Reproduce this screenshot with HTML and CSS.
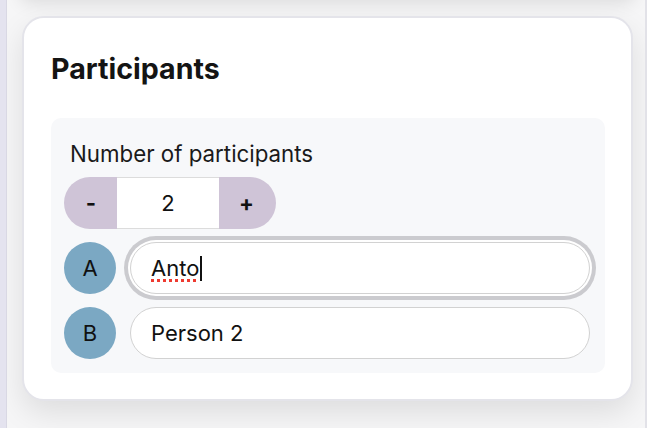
FILE: index.html
```html
<!DOCTYPE html>
<html lang="en">
<head>
<meta charset="utf-8">
<title>Participants</title>
<link rel="stylesheet" href="styles.css">
</head>
<body>
<div class="shell">
  <div class="sidebar"></div>
  <main class="column">
    <div class="prev-card"></div>
    <section class="card">
      <h2 class="title">Participants</h2>
      <div class="panel">
        <div class="label">Number of participants</div>
        <div class="stepper">
          <button class="step-btn minus">-</button>
          <div class="step-value">2</div>
          <button class="step-btn plus">+</button>
        </div>
        <div class="row">
          <div class="avatar">A</div>
          <div class="name-input focused"><span class="misspelled">Anto</span><span class="caret"></span></div>
        </div>
        <div class="row">
          <div class="avatar">B</div>
          <div class="name-input">Person 2</div>
        </div>
      </div>
    </section>
  </main>
</div>
</body>
</html>
```

FILE: styles.css
```css
* { box-sizing: border-box; }
html, body { margin: 0; padding: 0; }
body {
  width: 650px;
  height: 428px;
  overflow: hidden;
  background: #ffffff;
  font-family: Inter, "Noto Sans", sans-serif;
  color: #111;
}
.shell {
  display: flex;
  height: 428px;
}
.sidebar {
  width: 7px;
  flex: none;
  background: #e4e3ef;
  border-right: 1px solid #d9d8e4;
}
.column {
  width: 640px;
  flex: none;
  background: #f6f6f7;
  border-right: 2px solid #e2e2e8;
  padding: 0 12px 0 15px;
  overflow: hidden;
}
.prev-card {
  height: 40px;
  margin-top: -44px;
  margin-bottom: 20px;
  background: #f4f4f5;
  box-shadow: 0 6px 18px rgba(0, 0, 0, 0.12);
}
.card {
  background: #fff;
  border: 2px solid #e4e4ea;
  border-radius: 22px;
  box-shadow: 0 12px 30px rgba(0, 0, 0, 0.10);
  padding: 34px 26px 26px 27px;
}
.title {
  margin: 0 0 32px;
  font-size: 28.6px;
  font-weight: 700;
  line-height: 34px;
  color: #141414;
}
.panel {
  background: #f7f8fa;
  border-radius: 10px;
  padding: 25px 15px 14px 13px;
  display: flex;
  flex-direction: column;
  gap: 13px;
}
.label {
  font-size: 22.3px;
  line-height: 22px;
  padding-left: 6px;
  margin-bottom: -1px;
  color: #1a1a1a;
}
.stepper {
  display: flex;
  width: 212px;
  height: 52px;
  border-radius: 26px;
  overflow: hidden;
}
.step-btn {
  border: none;
  background: #cfc4d7;
  font-family: Inter, sans-serif;
  font-size: 22px;
  font-weight: 700;
  color: #111;
  padding: 0;
}
.step-btn.minus { width: 53px; padding-left: 1px; }
.step-btn.plus { width: 57px; padding-right: 2px; }
.step-value {
  flex: 1;
  background: #fff;
  border-top: 1px solid #dcdcdc;
  border-bottom: 1px solid #dcdcdc;
  display: flex;
  align-items: center;
  justify-content: center;
  font-size: 22px;
}
.row {
  display: flex;
  align-items: center;
  gap: 14px;
  height: 52px;
}
.avatar {
  width: 52px;
  height: 52px;
  flex: none;
  border-radius: 50%;
  background: #7ba8c3;
  display: flex;
  align-items: center;
  justify-content: center;
  font-size: 22px;
  color: #111;
}
.name-input {
  flex: 1;
  height: 52px;
  border: 1px solid #d2d2d2;
  border-radius: 26px;
  background: #fff;
  display: flex;
  align-items: center;
  padding-left: 20px;
  font-size: 22px;
  color: #111;
}
.name-input.focused {
  box-shadow: 0 0 0 2px #fff, 0 0 0 6px #cbcbcf;
}
.misspelled {
  text-decoration: underline dotted #ee3a30;
  text-decoration-thickness: 3px;
  text-underline-offset: 3px;
}
.caret {
  display: inline-block;
  width: 1.5px;
  height: 25px;
  background: #111;
  margin-left: 1px;
}
```
